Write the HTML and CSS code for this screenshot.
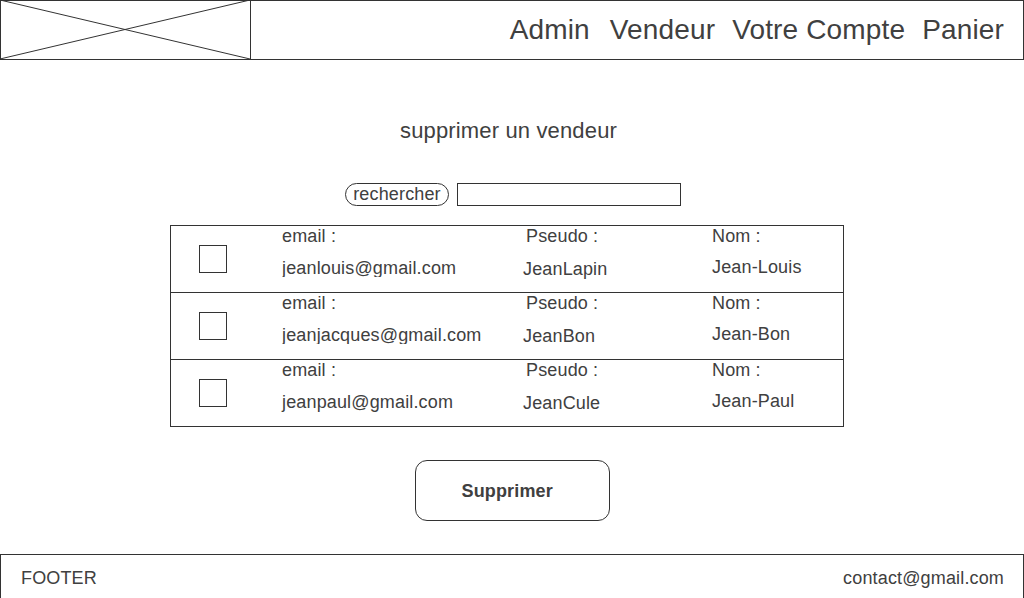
FILE: index.html
```html
<!DOCTYPE html>
<html lang="fr">
<head>
<meta charset="utf-8">
<title>supprimer un vendeur</title>
<link rel="stylesheet" href="styles.css">
</head>
<body>
<header class="topbar">
  <div class="logo">
    <svg class="logo-x" viewBox="0 0 250 58" preserveAspectRatio="none">
      <line x1="0" y1="0" x2="250" y2="58"/>
      <line x1="0" y1="58" x2="250" y2="0"/>
    </svg>
  </div>
  <nav class="nav">
    <a class="nav-item nav-first">Admin</a>
    <a class="nav-item">Vendeur</a>
    <a class="nav-item">Votre Compte</a>
    <a class="nav-item">Panier</a>
  </nav>
</header>

<main class="content">
  <h1 class="title">supprimer un vendeur</h1>

  <div class="search">
    <span class="pill">rechercher</span>
    <span class="field"></span>
  </div>

  <div class="table">
    <div class="row">
      <div class="cell-check"><span class="box"></span></div>
      <div class="cell-email">
        <div class="label">email :</div>
        <div class="value value-email clip">jeanlouis@gmail.com</div>
      </div>
      <div class="cell-pseudo">
        <div class="label label-pseudo">Pseudo :</div>
        <div class="value value-pseudo">JeanLapin</div>
      </div>
      <div class="cell-nom">
        <div class="label">Nom :</div>
        <div class="value value-nom">Jean-Louis</div>
      </div>
    </div>
    <div class="row">
      <div class="cell-check"><span class="box"></span></div>
      <div class="cell-email">
        <div class="label">email :</div>
        <div class="value value-email clip">jeanjacques@gmail.com</div>
      </div>
      <div class="cell-pseudo">
        <div class="label label-pseudo">Pseudo :</div>
        <div class="value value-pseudo">JeanBon</div>
      </div>
      <div class="cell-nom">
        <div class="label">Nom :</div>
        <div class="value value-nom">Jean-Bon</div>
      </div>
    </div>
    <div class="row">
      <div class="cell-check"><span class="box"></span></div>
      <div class="cell-email">
        <div class="label">email :</div>
        <div class="value value-email">jeanpaul@gmail.com</div>
      </div>
      <div class="cell-pseudo">
        <div class="label label-pseudo">Pseudo :</div>
        <div class="value value-pseudo">JeanCule</div>
      </div>
      <div class="cell-nom">
        <div class="label">Nom :</div>
        <div class="value value-nom">Jean-Paul</div>
      </div>
    </div>
  </div>

  <div class="actions">
    <button class="btn" type="button">Supprimer</button>
  </div>
</main>

<footer class="footer">
  <span>FOOTER</span>
  <span>contact@gmail.com</span>
</footer>
</body>
</html>
```

FILE: styles.css
```css
html, body {
  margin: 0;
  padding: 0;
  overflow: hidden;
}

body {
  width: 1024px;
  height: 598px;
  background: #ffffff;
  color: #404040;
  font-family: "Liberation Sans", Arial, sans-serif;
  letter-spacing: 0.15px;
}

/* Header */
.topbar {
  display: flex;
  align-items: stretch;
  height: 60px;
  box-sizing: border-box;
  border: 1px solid #333333;
}

.logo {
  width: 251px;
  box-sizing: border-box;
  border-right: 1px solid #333333;
  margin-top: -1px;
  margin-left: -1px;
  height: 59px;
}

.logo-x {
  display: block;
  width: 100%;
  height: 100%;
}

.logo-x line {
  stroke: #333333;
  stroke-width: 1;
  vector-effect: non-scaling-stroke;
}

.nav {
  margin-left: auto;
  display: flex;
  align-items: center;
  gap: 17px;
  padding-right: 19px;
}

.nav-item {
  font-size: 28px;
  line-height: 32px;
  color: #404040;
  text-decoration: none;
}

.nav-first {
  margin-right: 3px;
}

/* Content */
.content {
  display: flex;
  flex-direction: column;
}

.title {
  margin: 58px 0 0 0;
  font-size: 22px;
  font-weight: normal;
  line-height: 25px;
  text-align: center;
  padding-right: 7px;
}

.search {
  margin-top: 40px;
  display: flex;
  justify-content: center;
  gap: 8px;
  padding-left: 2px;
}

.pill {
  height: 23px;
  box-sizing: border-box;
  border: 1px solid #333333;
  border-radius: 12px;
  padding: 0 7px;
  font-size: 18px;
  line-height: 20px;
}

.field {
  width: 224px;
  height: 23px;
  box-sizing: border-box;
  border: 1px solid #333333;
}

/* Table */
.table {
  margin: 19px 0 0 170px;
  width: 674px;
  box-sizing: border-box;
  border: 1px solid #333333;
}

.row {
  display: flex;
  height: 66px;
}

.row + .row {
  border-top: 1px solid #333333;
}

.cell-check {
  width: 111px;
  display: flex;
  align-items: center;
}

.box {
  display: block;
  width: 28px;
  height: 28px;
  box-sizing: border-box;
  border: 1px solid #333333;
  margin-left: 28px;
}

.cell-email {
  width: 241px;
}

.cell-pseudo {
  width: 189px;
}

.cell-nom {
  flex: 1;
}

.label,
.value {
  font-size: 18px;
  line-height: 20px;
  white-space: nowrap;
}

.label-pseudo {
  padding-left: 3px;
}

.value-email {
  margin-top: 12px;
}

.value-pseudo {
  margin-top: 13px;
}

.value-nom {
  margin-top: 11px;
}

.clip {
  height: 18.5px;
  overflow: hidden;
}

/* Button */
.actions {
  margin-top: 33px;
  display: flex;
  justify-content: center;
}

.btn {
  width: 195px;
  height: 61px;
  box-sizing: border-box;
  border: 1px solid #333333;
  border-radius: 12px;
  background: #ffffff;
  color: #404040;
  font-family: "Liberation Sans", Arial, sans-serif;
  font-size: 18px;
  font-weight: bold;
  letter-spacing: 0.15px;
  line-height: 20px;
  text-align: left;
  padding: 0 0 0 46px;
}

/* Footer */
.footer {
  margin-top: 33px;
  height: 44px;
  box-sizing: border-box;
  border: 1px solid #333333;
  border-bottom: 0;
  display: flex;
  justify-content: space-between;
  align-items: flex-start;
  padding: 13px 19px 0 20px;
  font-size: 18px;
  line-height: 20px;
}
```
